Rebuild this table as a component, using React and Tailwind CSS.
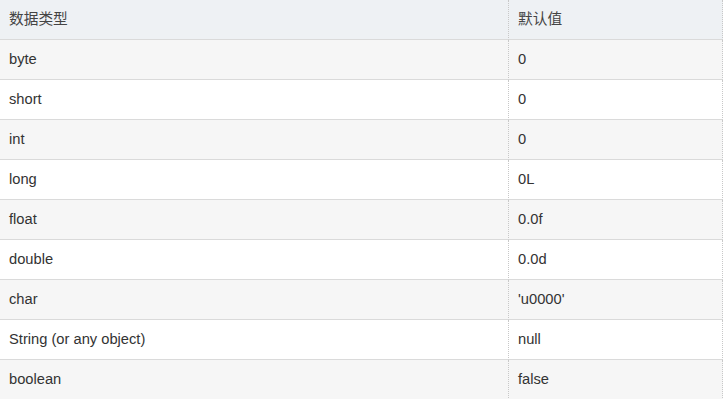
import React from 'react';

const ROWS = [
  ['byte', '0'],
  ['short', '0'],
  ['int', '0'],
  ['long', '0L'],
  ['float', '0.0f'],
  ['double', '0.0d'],
  ['char', "'u0000'"],
  ['String (or any object)', 'null'],
  ['boolean', 'false'],
];

const cell = 'h-[40px] text-left font-normal pl-[9px] border-b border-b-[#dadada] [border-bottom-style:solid] border-r border-r-[#c8c8c8] [border-right-style:dotted]';

export default function App() {
  return (
    <div className="w-[723px] h-[399px] overflow-hidden bg-white text-[14.7px] text-[#333] font-['Liberation_Sans','Noto_Sans_CJK_SC',sans-serif]">
      <table className="w-[723px] border-separate border-spacing-0 table-fixed">
        <colgroup>
          <col className="w-[509px]" />
          <col />
        </colgroup>
        <thead>
          <tr className="bg-[#eef1f4] text-[#444]">
            <th className={cell}>数据类型</th>
            <th className={cell}>默认值</th>
          </tr>
        </thead>
        <tbody>
          {ROWS.map(([type, val], i) => (
            <tr key={type} className={i % 2 === 0 ? 'bg-[#f6f6f6]' : 'bg-white'}>
              <td className={cell}>{type}</td>
              <td className={cell}>{val}</td>
            </tr>
          ))}
        </tbody>
      </table>
    </div>
  );
}
